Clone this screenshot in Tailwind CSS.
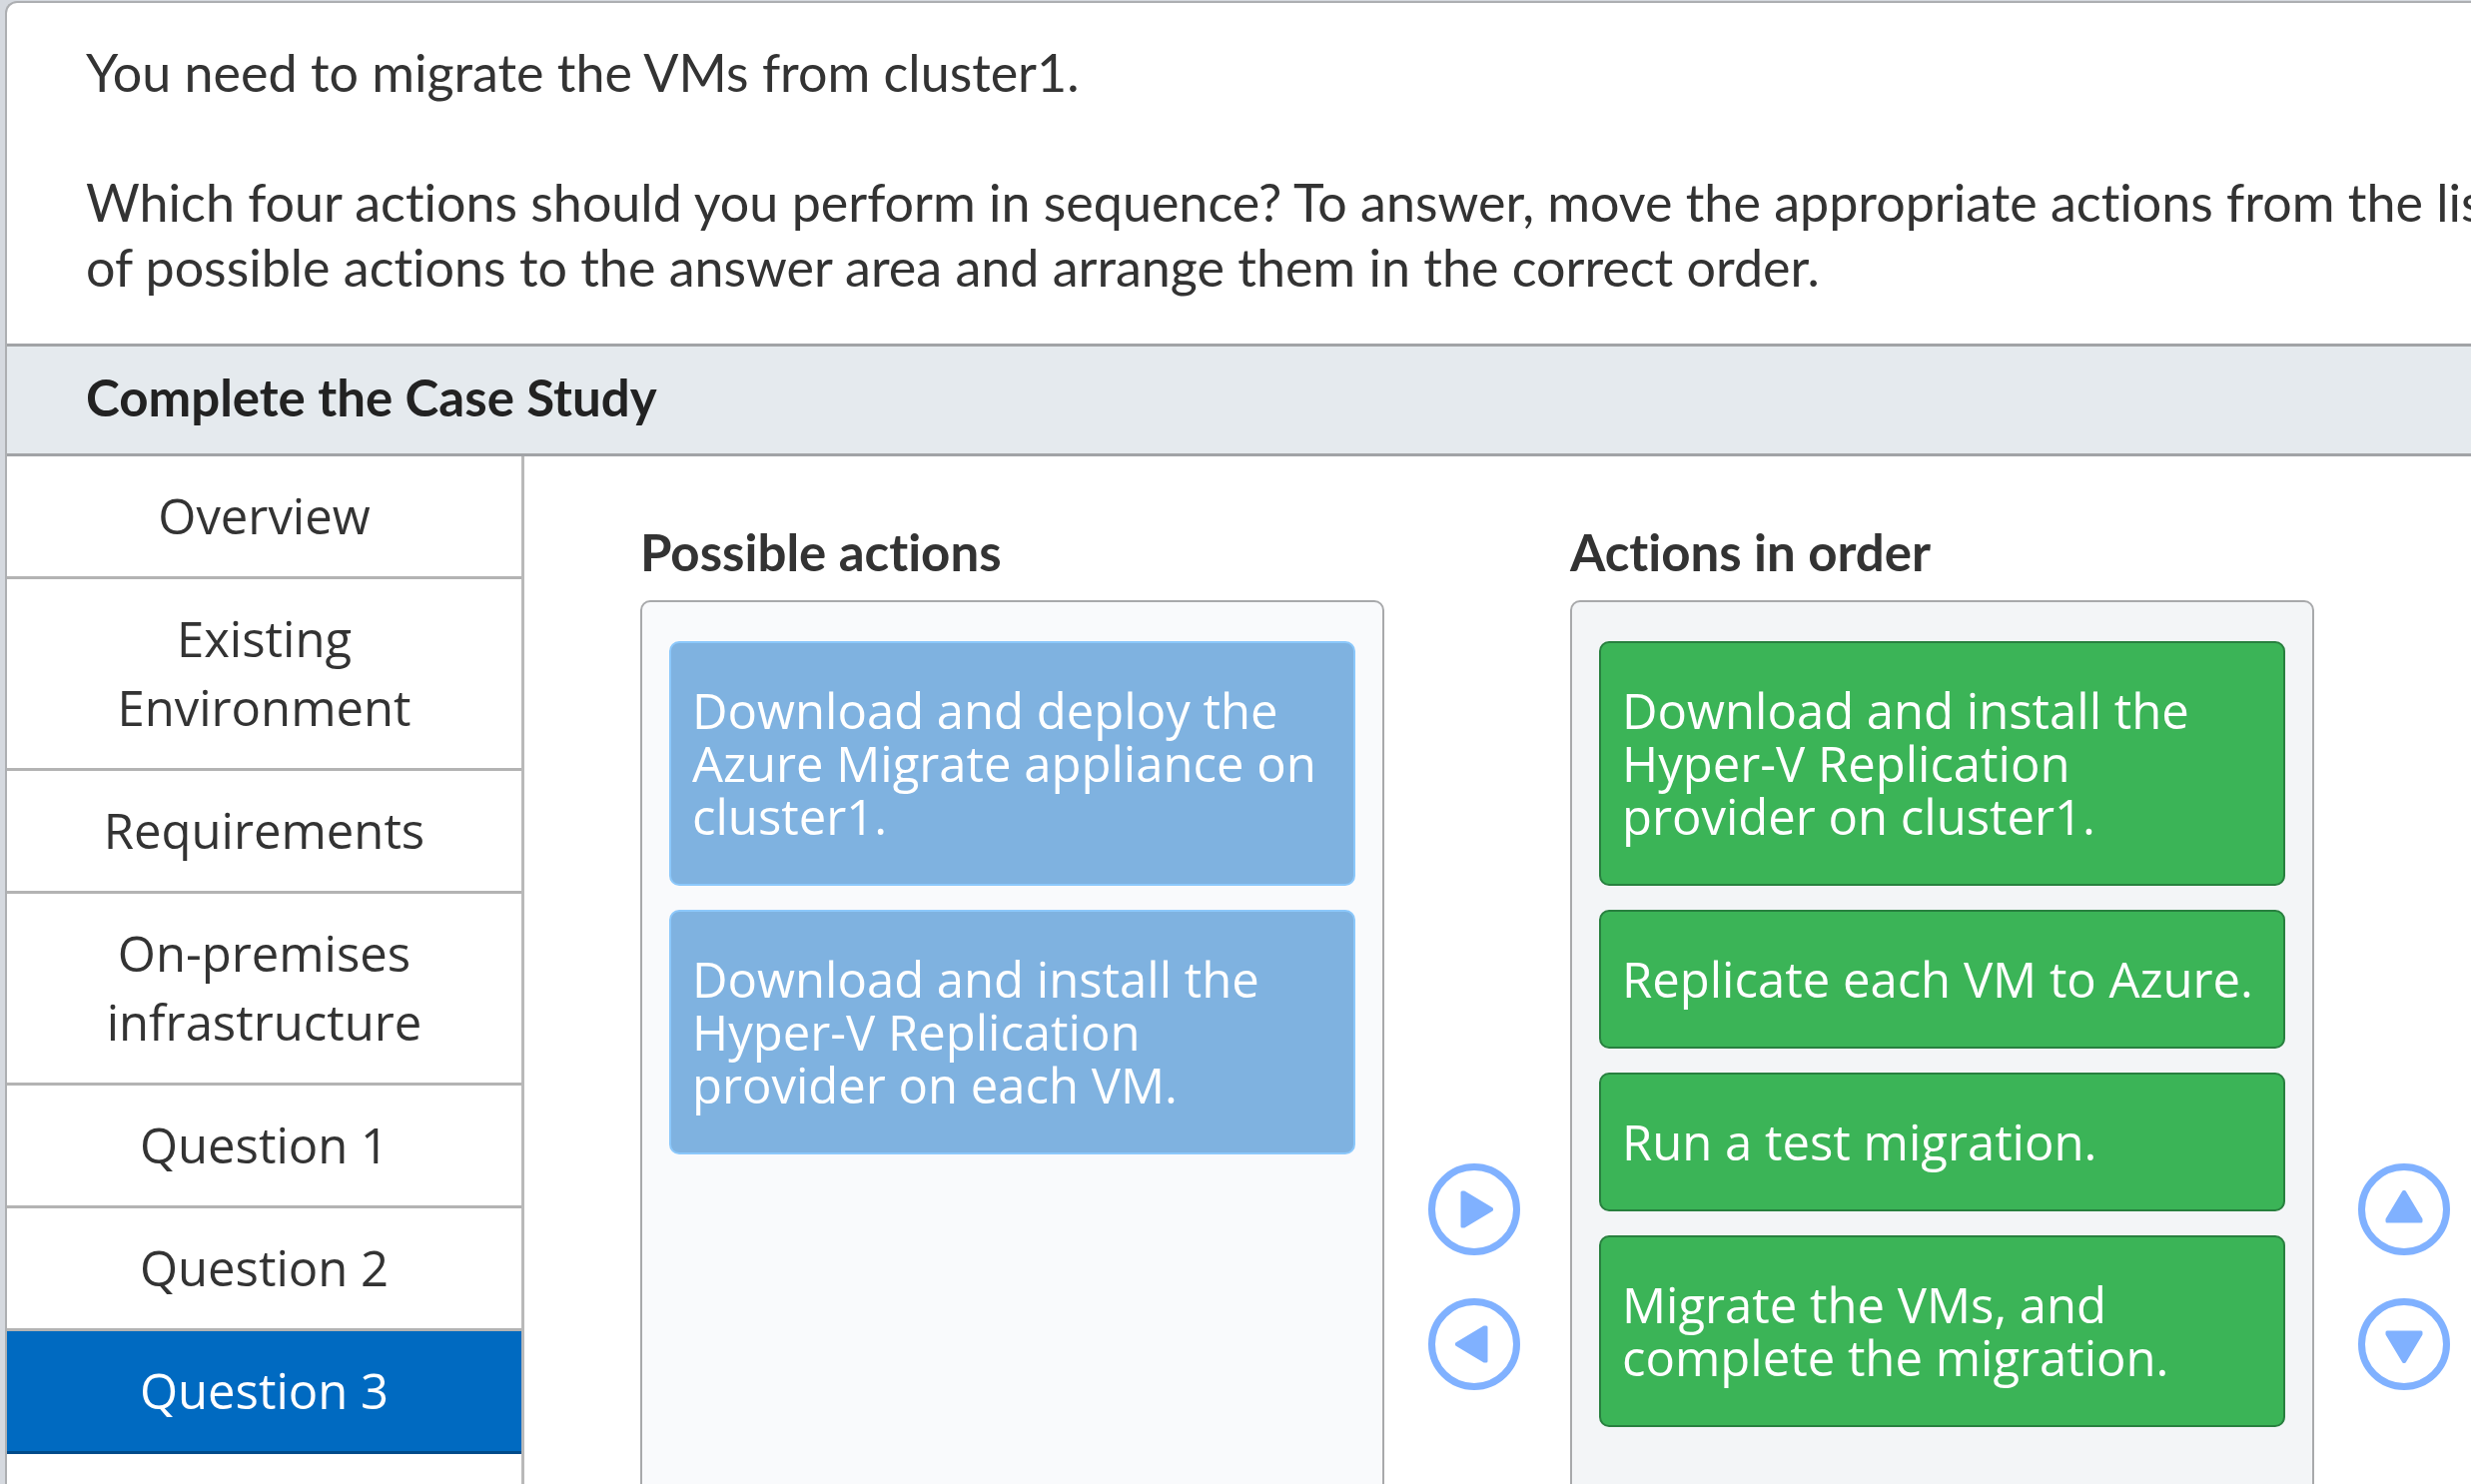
<!DOCTYPE html>
<html lang="en">
<head>
<meta charset="utf-8">
<title>Case Study</title>
<script src="https://cdn.jsdelivr.net/npm/@tailwindcss/browser@4"></script>
</head>
<body class="h-screen overflow-hidden bg-[#d5d9df] pt-px pl-[5px] text-[#333333] font-['Open_Sans',sans-serif] [font-variant-ligatures:none]">
<main class="rounded-tl-[12px] border-t-2 border-l-2 border-[#adafb2] bg-white">

  <section class="pt-[37px] pb-11 pl-[79px] font-['Lato',sans-serif] text-[52px] leading-[65px] whitespace-nowrap overflow-hidden">
    <p class="mb-[65px]">You need to migrate the VMs from cluster1.</p>
    <p>Which four actions should you perform in sequence? To answer, move the appropriate actions from the list<br>of possible actions to the answer area and arrange them in the correct order.</p>
  </section>

  <header class="border-y-3 border-[#a1a3a6] bg-[#e5eaee] pt-[19px] pb-6 pl-[79px]">
    <h1 class="font-['Lato',sans-serif] text-[51px] leading-[64px] font-bold text-[#222222]">Complete the Case Study</h1>
  </header>

  <div class="flex">
    <nav aria-label="Case study sections" class="w-[518px] shrink-0 border-r-3 border-[#b9b9b9] text-[49px] leading-[69px]">
      <button class="block w-full border-b-3 border-[#b3b3b3] px-12 pt-[25px] pb-[26px]">Overview</button>
      <button class="block w-full border-b-3 border-[#b3b3b3] px-12 pt-[25px] pb-[26px]">Existing Environment</button>
      <button class="block w-full border-b-3 border-[#b3b3b3] px-12 pt-[25px] pb-[26px]">Requirements</button>
      <button class="block w-full border-b-3 border-[#b3b3b3] px-12 pt-[25px] pb-[26px]">On-premises infrastructure</button>
      <button class="block w-full border-b-3 border-[#b3b3b3] px-12 pt-[25px] pb-[26px]">Question 1</button>
      <button class="block w-full border-b-3 border-[#b3b3b3] px-12 pt-[25px] pb-[26px]">Question 2</button>
      <button aria-current="page" class="block w-full border-b-3 border-[#004b8a] bg-[#006ac1] px-12 pt-[25px] pb-[26px] text-white">Question 3</button>
    </nav>

    <section class="grid flex-1 grid-cols-[1fr_98px_1fr_98px] grid-rows-[auto_1355px] gap-x-11 gap-y-4 pt-16 pr-[15px] pl-[116px]">
      <h2 class="col-start-1 font-['Lato',sans-serif] text-[51px] leading-[64px] font-bold">Possible actions</h2>
      <h2 class="col-start-3 font-['Lato',sans-serif] text-[51px] leading-[64px] font-bold">Actions in order</h2>

      <ul class="col-start-1 row-start-2 flex flex-col gap-6 rounded-[10px] border-2 border-[#a8a9ab] bg-[#f9fafc] px-[27px] py-[39px] text-[49px] leading-[53px] text-white">
        <li><button class="block w-full rounded-[10px] border-2 border-[#8cc8fb] bg-[#7fb2e0] px-[21px] py-[41px] text-left">Download and deploy the Azure Migrate appliance on cluster1.</button></li>
        <li><button class="block w-full rounded-[10px] border-2 border-[#8cc8fb] bg-[#7fb2e0] px-[21px] py-[41px] text-left">Download and install the Hyper-V Replication provider on each VM.</button></li>
      </ul>

      <div class="col-start-2 row-start-2 flex flex-col gap-[43px] self-center">
        <button aria-label="Add action" class="size-[92px]">
          <svg viewBox="0 0 92 92" class="size-full" fill="#80b1ff" stroke="#80b1ff"><circle cx="46" cy="46" r="42.5" fill="none" stroke-width="7"/><path d="M34 29v34h2L63.500 46.500v-1L36 29z" stroke-width="3" stroke-linejoin="round"/></svg>
        </button>
        <button aria-label="Remove action" class="size-[92px]">
          <svg viewBox="0 0 92 92" class="size-full" fill="#80b1ff" stroke="#80b1ff"><circle cx="46" cy="46" r="42.5" fill="none" stroke-width="7"/><path d="M58 29v34h-2L28.500 46.500v-1L56 29z" stroke-width="3" stroke-linejoin="round"/></svg>
        </button>
      </div>

      <ol class="col-start-3 row-start-2 flex flex-col gap-6 rounded-[10px] border-2 border-[#a8a9ab] bg-[#f3f5f7] px-[27px] py-[39px] text-[49px] leading-[53px] text-white">
        <li><button class="block w-full rounded-[10px] border-2 border-[#28803f] bg-[#3bb457] px-[21px] py-[41px] text-left">Download and install the Hyper-V Replication provider on cluster1.</button></li>
        <li><button class="block w-full rounded-[10px] border-2 border-[#28803f] bg-[#3bb457] px-[21px] py-[41px] text-left">Replicate each VM to Azure.</button></li>
        <li><button class="block w-full rounded-[10px] border-2 border-[#28803f] bg-[#3bb457] px-[21px] py-[41px] text-left">Run a test migration.</button></li>
        <li><button class="block w-full rounded-[10px] border-2 border-[#28803f] bg-[#3bb457] px-[21px] py-[41px] text-left">Migrate the VMs, and complete the migration.</button></li>
      </ol>

      <div class="col-start-4 row-start-2 flex flex-col gap-[43px] self-center">
        <button aria-label="Move up" class="size-[92px]">
          <svg viewBox="0 0 92 92" class="size-full" fill="#80b1ff" stroke="#80b1ff"><circle cx="46" cy="46" r="42.5" fill="none" stroke-width="7"/><path d="M29 58h34v-2L46.500 28.500h-1L29 56z" stroke-width="3" stroke-linejoin="round"/></svg>
        </button>
        <button aria-label="Move down" class="size-[92px]">
          <svg viewBox="0 0 92 92" class="size-full" fill="#80b1ff" stroke="#80b1ff"><circle cx="46" cy="46" r="42.5" fill="none" stroke-width="7"/><path d="M29 34h34v2L46.500 63.500h-1L29 36z" stroke-width="3" stroke-linejoin="round"/></svg>
        </button>
      </div>
    </section>
  </div>
</main>
</body>
</html>
